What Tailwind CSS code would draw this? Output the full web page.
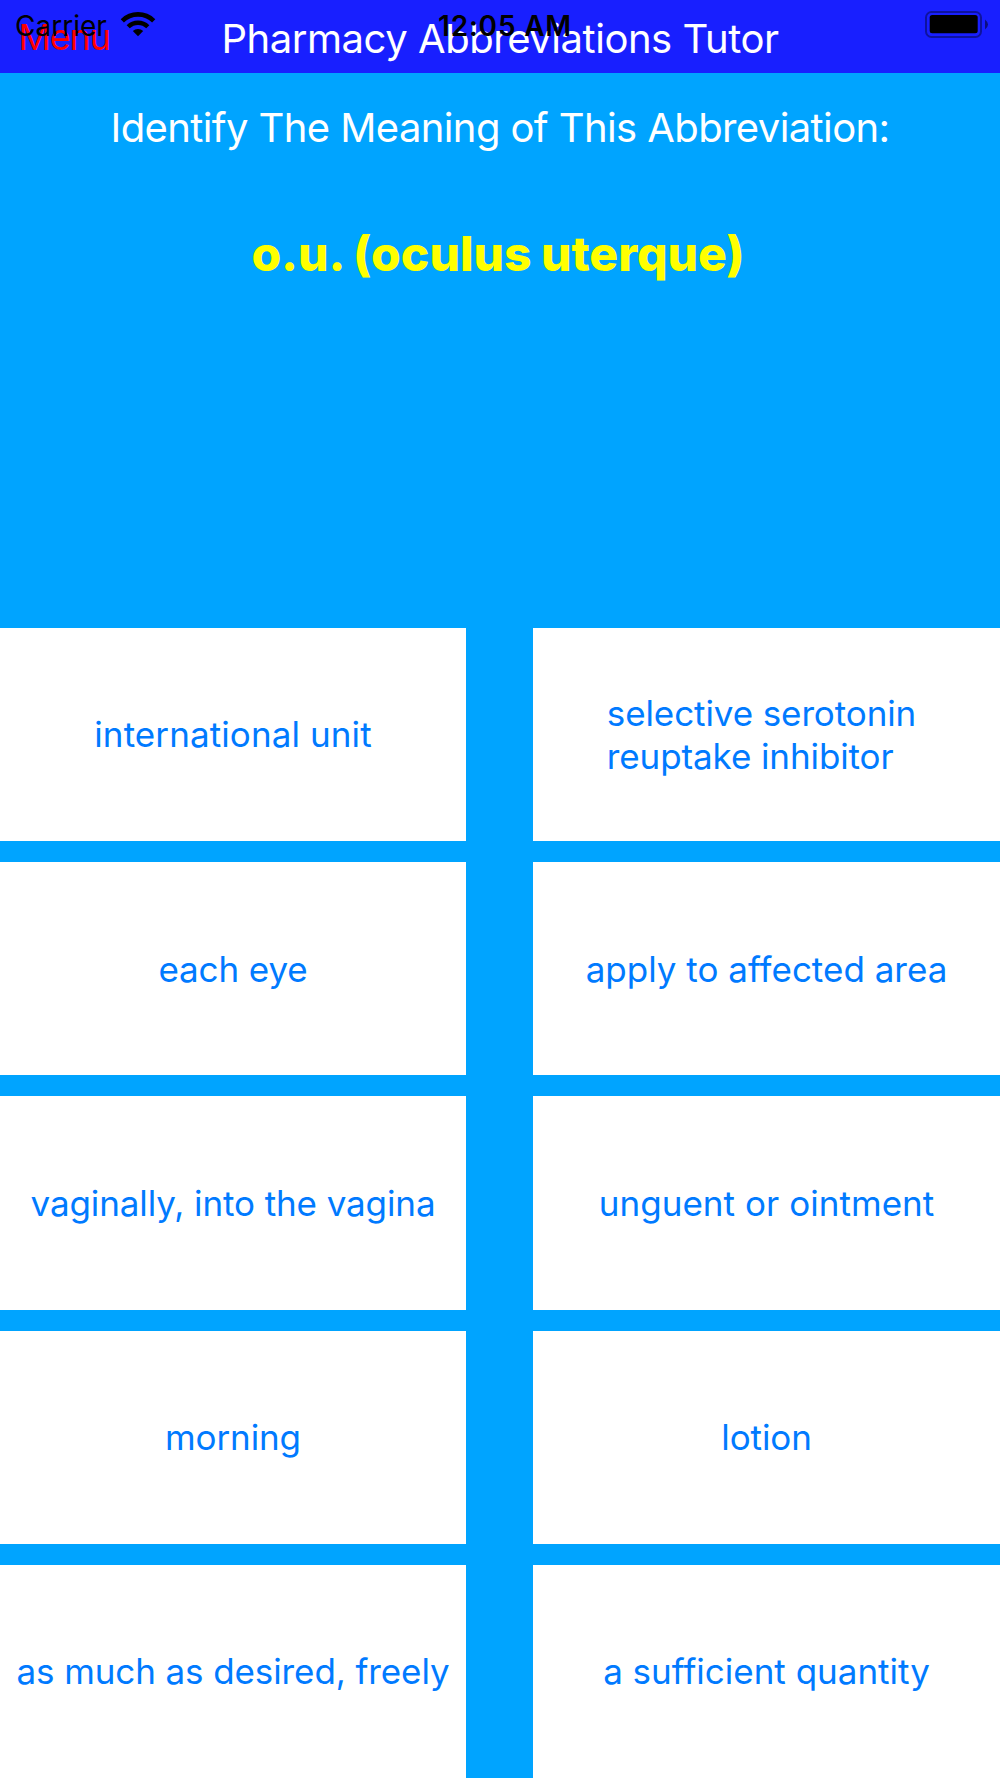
<!DOCTYPE html>
<html lang="en">

<head>
    <meta charset="UTF-8">
    <meta name="viewport" content="width=device-width, initial-scale=1.0">
    <script src="https://cdn.jsdelivr.net/npm/@tailwindcss/browser@4"></script>
    <title>Pharmacy Abbreviations Tutor</title>
</head>

<body class="h-[1778px] w-[1000px] overflow-hidden flex flex-col bg-[#00a4ff] font-['Inter',sans-serif]">
    <!-- nav bar -->
    <header class="relative h-[72.500px] shrink-0 bg-[#181fff] flex items-center justify-center">
        <button class="absolute left-[18.500px] top-[16px] text-[#ff0000] text-[36px] leading-[42px] tracking-[-1.200px]">Menu</button>
        <h1 class="text-white text-[40px] leading-[48px] pt-[5px] tracking-[-0.45px] whitespace-nowrap">Pharmacy Abbreviations Tutor</h1>

        <!-- status bar -->
        <div class="absolute inset-x-0 top-0 h-[50px] text-black">
            <span class="absolute left-[15px] top-[9px] text-[28px] leading-[34px]">Carrier</span>
            <svg class="absolute left-[120px] top-[11px]" width="36" height="26" viewBox="0 0 36 26" fill="none" stroke="#000">
                <path d="M2.300 9.800a22.500 22.500 0 0 1 31.400 0" stroke-width="4.600" />
                <path d="M8.200 15.700a14 14 0 0 1 19.600 0" stroke-width="4.400" />
                <path d="M18 25.200l-5.200-5.200a7.500 7.500 0 0 1 10.400 0z" fill="#000" stroke="none" />
            </svg>
            <span class="absolute left-[438px] top-[9px] text-[28px] leading-[34px] font-semibold tracking-[0.8px] whitespace-nowrap">12:05 AM</span>
            <svg class="absolute left-[925px] top-[11px]" width="64" height="28" viewBox="0 0 64 28">
                <rect x="1" y="1" width="55" height="25" rx="5.500" fill="none" stroke="#000" stroke-opacity=".38" stroke-width="2" />
                <rect x="4.700" y="4" width="48" height="18.200" rx="2.500" />
                <path d="M60 8.500q6 5 0 10z" fill-opacity=".5" />
            </svg>
        </div>
    </header>

    <!-- question -->
    <section class="h-[555.5px] shrink-0 flex flex-col items-center text-center">
        <p class="mt-[31px] text-white text-[40px] leading-[48px] tracking-[-0.6px] whitespace-nowrap">Identify The Meaning of This Abbreviation:</p>
        <p class="mt-[73px] mr-[4px] text-[#ffff00] text-[48px] leading-[58px] font-extrabold [word-spacing:-1px] whitespace-nowrap">o.u. (oculus uterque)</p>
    </section>

    <!-- answers -->
    <main class="grid grid-cols-[466px_467px] gap-x-[67px] gap-y-[20.900px] auto-rows-[213.300px] text-[#007aff] text-[35px] leading-[42.500px] tracking-[-0.1px]">
        <button class="bg-white flex items-center justify-center"><span class="tracking-[0.1px]">international unit</span></button>
        <button class="bg-white flex items-center justify-center"><span class="text-left mr-[10px]">selective serotonin<br>reuptake inhibitor</span></button>
        <button class="bg-white flex items-center justify-center"><span>each eye</span></button>
        <button class="bg-white flex items-center justify-center"><span class="tracking-[0px]">apply to affected area</span></button>
        <button class="bg-white flex items-center justify-center"><span>vaginally, into the vagina</span></button>
        <button class="bg-white flex items-center justify-center"><span class="tracking-[0.050px]">unguent or ointment</span></button>
        <button class="bg-white flex items-center justify-center"><span>morning</span></button>
        <button class="bg-white flex items-center justify-center"><span>lotion</span></button>
        <button class="bg-white flex items-center justify-center"><span>as much as desired, freely</span></button>
        <button class="bg-white flex items-center justify-center"><span class="tracking-[0px]">a sufficient quantity</span></button>
    </main>
</body>

</html>
